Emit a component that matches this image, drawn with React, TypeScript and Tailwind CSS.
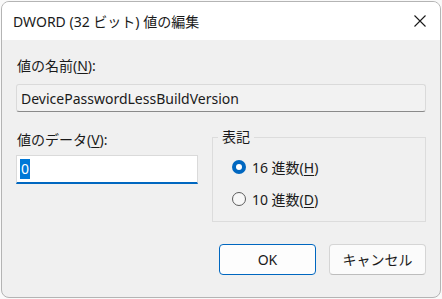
import React from "react";

const font = { fontFamily: '"Noto Sans", "Noto Sans CJK JP", sans-serif' };

function Radio({ checked, label, mnemonic }: { checked: boolean; label: string; mnemonic: string }) {
  return (
    <div className="flex items-center h-[20px]">
      {checked ? (
        <span className="w-[14px] h-[14px] rounded-full bg-[#0067c0] flex items-center justify-center">
          <span className="w-[6px] h-[6px] rounded-full bg-white" />
        </span>
      ) : (
        <span className="w-[14px] h-[14px] rounded-full border border-[#5c5c5c] bg-[#f7f7f7]" />
      )}
      <span className="ml-[6px] text-[14px] text-[#1a1a1a]">
        {label}(<span className="underline underline-offset-2">{mnemonic}</span>)
      </span>
    </div>
  );
}

export default function App() {
  return (
    <div className="w-[442px] h-[299px] bg-[#f9f9f9] pt-[1px] pl-[1px]" style={font}>
      <div className="w-[440px] h-[297px] rounded-[8px] border border-[#b4b4b4] overflow-hidden bg-[#f0f0f0] flex flex-col">
        {/* title bar */}
        <div className="h-[38px] bg-white flex items-center justify-between pl-[11px] pr-[13px]">
          <span className="text-[14px] text-[#1a1a1a]">DWORD (32 ビット) 値の編集</span>
          <svg width="14" height="14" viewBox="0 0 14 14">
            <path d="M1.5 1.5 L12.5 12.5 M12.5 1.5 L1.5 12.5" stroke="#1a1a1a" strokeWidth="1.1" />
          </svg>
        </div>

        <div className="flex flex-col px-[14px] pt-[16px]">
          <div className="text-[14px] leading-[20px] text-[#1a1a1a] pl-[1px]">
            値の名前(<span className="underline underline-offset-2">N</span>):
          </div>
          <div className="mt-[8px] h-[28px] rounded-[3px] border border-[#dadada] border-b-[#8a8a8a] bg-[#f2f2f2] flex items-center px-[4px] text-[14px] text-[#1a1a1a]">
            DevicePasswordLessBuildVersion
          </div>

          <div className="flex mt-[18px]">
            <div className="w-[184px] flex flex-col">
              <div className="text-[14px] leading-[20px] text-[#1a1a1a] pl-[1px]">
                値のデータ(<span className="underline underline-offset-2">V</span>):
              </div>
              <div className="mt-[5px] h-[29px] bg-white border border-[#dadada] border-b-2 border-b-[#0067c0] flex items-center px-[3px]">
                <span className="bg-[#0078d7] text-white text-[14px] leading-[20px] px-[1px]">0</span>
              </div>
            </div>

            <fieldset className="ml-[14px] w-[216px] h-[93px] border border-[#dcdcdc] px-[19px] pt-[12px] -mt-[1px]">
              <legend className="-ml-[14px] px-[4px] text-[14px] leading-[16px] text-[#1a1a1a]">表記</legend>
              <div className="flex flex-col gap-[12px]">
                <Radio checked label="16 進数" mnemonic="H" />
                <Radio checked={false} label="10 進数" mnemonic="D" />
              </div>
            </fieldset>
          </div>

          <div className="flex justify-end gap-[13px] mt-[22px]">
            <button className="w-[97px] h-[31px] rounded-[4px] border border-[#0067c0] bg-[#fdfdfd] text-[14px] text-[#1a1a1a]">
              OK
            </button>
            <button className="w-[97px] h-[31px] rounded-[4px] border border-[#d5d5d5] border-b-[#bdbdbd] bg-[#fbfbfb] text-[14px] text-[#1a1a1a]">
              キャンセル
            </button>
          </div>
        </div>
      </div>
    </div>
  );
}
